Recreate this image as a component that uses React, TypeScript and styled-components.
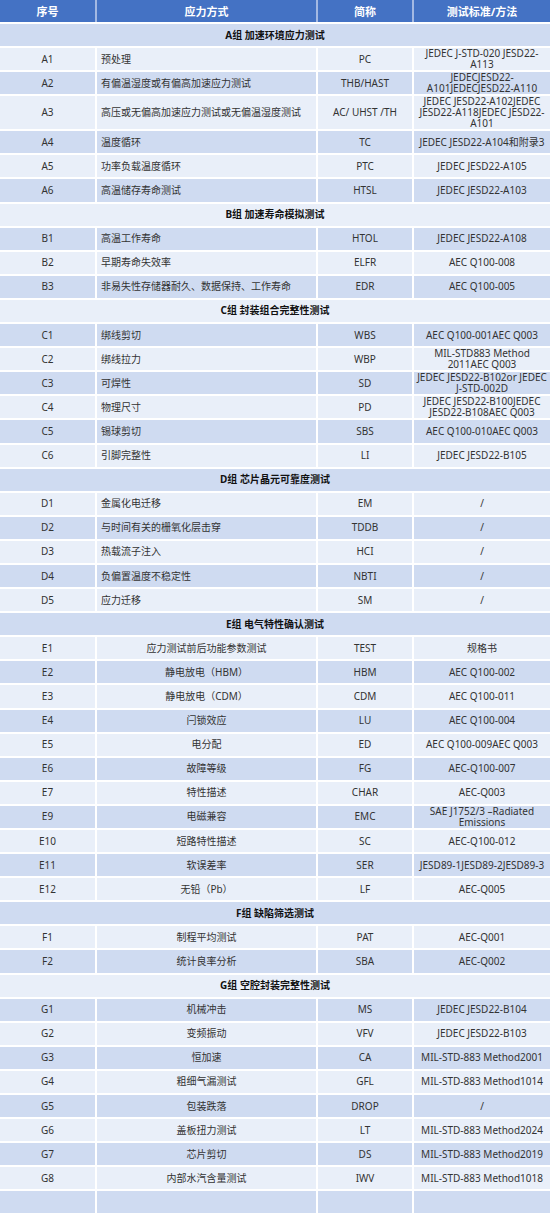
import styled, { createGlobalStyle } from 'styled-components';

type Item = [string, string, string, string];
type Group = { title: string; centered: boolean; items: Item[] };

const groups: Group[] = [
  {
    title: 'A组 加速环境应力测试',
    centered: false,
    items: [
      ['A1', '预处理', 'PC', 'JEDEC J-STD-020 JESD22-\nA113'],
      ['A2', '有偏温湿度或有偏高加速应力测试', 'THB/HAST', 'JEDECJESD22-\nA101JEDECJESD22-A110'],
      ['A3', '高压或无偏高加速应力测试或无偏温湿度测试', 'AC/ UHST /TH', 'JEDEC JESD22-A102JEDEC\nJESD22-A118JEDEC JESD22-\nA101'],
      ['A4', '温度循环', 'TC', 'JEDEC JESD22-A104和附录3'],
      ['A5', '功率负载温度循环', 'PTC', 'JEDEC JESD22-A105'],
      ['A6', '高温储存寿命测试', 'HTSL', 'JEDEC JESD22-A103'],
    ],
  },
  {
    title: 'B组 加速寿命模拟测试',
    centered: false,
    items: [
      ['B1', '高温工作寿命', 'HTOL', 'JEDEC JESD22-A108'],
      ['B2', '早期寿命失效率', 'ELFR', 'AEC Q100-008'],
      ['B3', '非易失性存储器耐久、数据保持、工作寿命', 'EDR', 'AEC Q100-005'],
    ],
  },
  {
    title: 'C组 封装组合完整性测试',
    centered: false,
    items: [
      ['C1', '绑线剪切', 'WBS', 'AEC Q100-001AEC Q003'],
      ['C2', '绑线拉力', 'WBP', 'MIL-STD883 Method\n2011AEC Q003'],
      ['C3', '可焊性', 'SD', 'JEDEC JESD22-B102or JEDEC\nJ-STD-002D'],
      ['C4', '物理尺寸', 'PD', 'JEDEC JESD22-B100JEDEC\nJESD22-B108AEC Q003'],
      ['C5', '锡球剪切', 'SBS', 'AEC Q100-010AEC Q003'],
      ['C6', '引脚完整性', 'LI', 'JEDEC JESD22-B105'],
    ],
  },
  {
    title: 'D组 芯片晶元可靠度测试',
    centered: false,
    items: [
      ['D1', '金属化电迁移', 'EM', '/'],
      ['D2', '与时间有关的栅氧化层击穿', 'TDDB', '/'],
      ['D3', '热载流子注入', 'HCI', '/'],
      ['D4', '负偏置温度不稳定性', 'NBTI', '/'],
      ['D5', '应力迁移', 'SM', '/'],
    ],
  },
  {
    title: 'E组 电气特性确认测试',
    centered: true,
    items: [
      ['E1', '应力测试前后功能参数测试', 'TEST', '规格书'],
      ['E2', '静电放电（HBM）', 'HBM', 'AEC Q100-002'],
      ['E3', '静电放电（CDM）', 'CDM', 'AEC Q100-011'],
      ['E4', '闩锁效应', 'LU', 'AEC Q100-004'],
      ['E5', '电分配', 'ED', 'AEC Q100-009AEC Q003'],
      ['E6', '故障等级', 'FG', 'AEC-Q100-007'],
      ['E7', '特性描述', 'CHAR', 'AEC-Q003'],
      ['E9', '电磁兼容', 'EMC', 'SAE J1752/3 –Radiated\nEmissions'],
      ['E10', '短路特性描述', 'SC', 'AEC-Q100-012'],
      ['E11', '软误差率', 'SER', 'JESD89-1JESD89-2JESD89-3'],
      ['E12', '无铅（Pb）', 'LF', 'AEC-Q005'],
    ],
  },
  {
    title: 'F组 缺陷筛选测试',
    centered: true,
    items: [
      ['F1', '制程平均测试', 'PAT', 'AEC-Q001'],
      ['F2', '统计良率分析', 'SBA', 'AEC-Q002'],
    ],
  },
  {
    title: 'G组 空腔封装完整性测试',
    centered: true,
    items: [
      ['G1', '机械冲击', 'MS', 'JEDEC JESD22-B104'],
      ['G2', '变频振动', 'VFV', 'JEDEC JESD22-B103'],
      ['G3', '恒加速', 'CA', 'MIL-STD-883 Method2001'],
      ['G4', '粗细气漏测试', 'GFL', 'MIL-STD-883 Method1014'],
      ['G5', '包装跌落', 'DROP', '/'],
      ['G6', '盖板扭力测试', 'LT', 'MIL-STD-883 Method2024'],
      ['G7', '芯片剪切', 'DS', 'MIL-STD-883 Method2019'],
      ['G8', '内部水汽含量测试', 'IWV', 'MIL-STD-883 Method1018'],
    ],
  },
];

export default function App() {
  // row 0 is the header, after that the bands alternate dark / light
  let index = 0;
  const tone = () => (++index % 2 === 1 ? 'dark' : 'light');

  return (
    <>
      <GlobalStyle />
      <Table>
        <HeaderRow>
          <HeadCell>序号</HeadCell>
          <HeadCell>应力方式</HeadCell>
          <HeadCell>简称</HeadCell>
          <HeadCell>测试标准/方法</HeadCell>
        </HeaderRow>
        {groups.map((group) => (
          <Section key={group.title}>
            <Row>
              <GroupCell $tone={tone()}>{group.title}</GroupCell>
            </Row>
            {group.items.map(([no, method, abbr, standard]) => {
              const t = tone();
              return (
                <Row key={no}>
                  <Cell $tone={t}>{no}</Cell>
                  <Cell $tone={t} $left={!group.centered}>
                    {method}
                  </Cell>
                  <Cell $tone={t}>{abbr}</Cell>
                  <Cell $tone={t}>{standard}</Cell>
                </Row>
              );
            })}
          </Section>
        ))}
        <Row>
          <Cell $tone="dark" />
          <Cell $tone="dark" />
          <Cell $tone="dark" />
          <Cell $tone="dark" />
        </Row>
      </Table>
    </>
  );
}

const GlobalStyle = createGlobalStyle`
  html, body {
    margin: 0;
    padding: 0;
    background: #ffffff;
  }
  body {
    width: 550px;
    font-family: "Noto Sans", "Noto Sans CJK SC", sans-serif;
  }
`;

const Table = styled.div`
  display: flex;
  flex-direction: column;
  gap: 2px;
  width: 550px;
  background: #ffffff;
`;

const Section = styled.div`
  display: contents;
`;

const Row = styled.div`
  display: grid;
  grid-template-columns: 95px 219px 94px 1fr;
  column-gap: 2px;
  min-height: 22.1px;
`;

const HeaderRow = styled(Row)`
  background: #a4b9e3;
  min-height: 22px;
`;

const HeadCell = styled.div`
  display: flex;
  align-items: center;
  justify-content: center;
  background: #4472c4;
  color: #ffffff;
  font-size: 11px;
  font-weight: 700;
`;

const bands = {
  dark: '#cfdbf1',
  light: '#e9eff9',
};

const Cell = styled.div<{ $tone: 'dark' | 'light'; $left?: boolean }>`
  display: flex;
  align-items: center;
  justify-content: ${(p) => (p.$left ? 'flex-start' : 'center')};
  padding: 0 ${(p) => (p.$left ? '4px' : '1px')};
  background: ${(p) => bands[p.$tone]};
  color: #333333;
  font-size: 10px;
  line-height: 11px;
  text-align: ${(p) => (p.$left ? 'left' : 'center')};
  white-space: pre-line;
`;

const GroupCell = styled(Cell)`
  grid-column: 1 / -1;
  justify-content: center;
  color: #111111;
  font-weight: 700;
`;
